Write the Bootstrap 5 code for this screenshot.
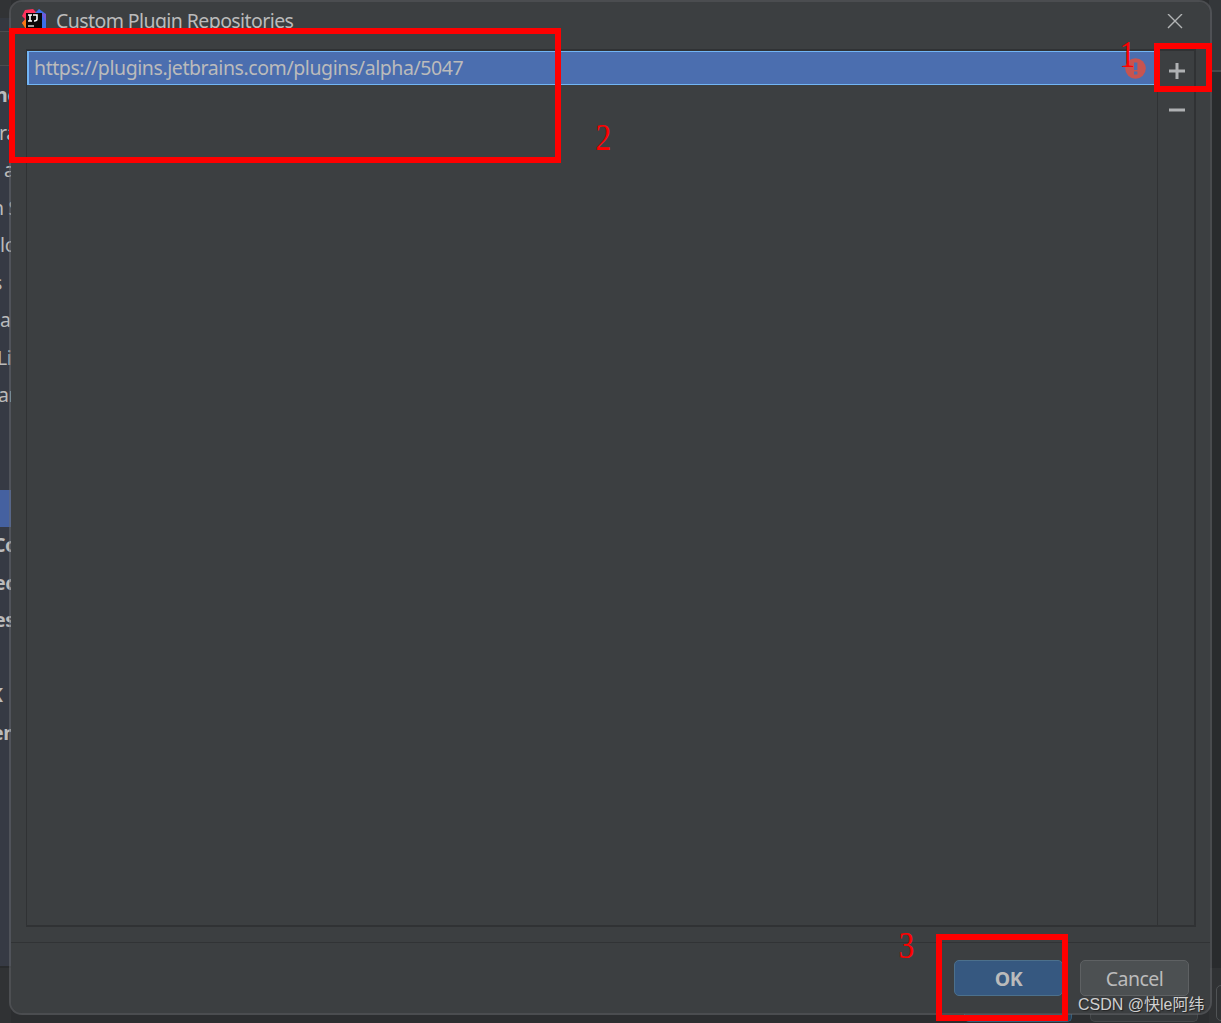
<!DOCTYPE html>
<html lang="en">
<head>
  <meta charset="UTF-8">
  <meta name="viewport" content="width=device-width, initial-scale=1.0">
  <title>Custom Plugin Repositories</title>
  <link rel="stylesheet" href="https://cdn.jsdelivr.net/npm/bootstrap@5.3.0/dist/css/bootstrap.min.css">
  <style>
    body {
      width: 1221px;
      height: 1023px;
      background: #2c2e30;
      color: #bbbbbb;
      font-family: "Noto Sans", "Noto Sans CJK SC", sans-serif;
      font-size: 19.5px;
      line-height: 1;
    }

    /* Settings window behind the dialog */
    .behind-left { width: 11px; }
    .behind-title { height: 31px; background: linear-gradient(#313335 18px, #343840 18px); }
    .behind-search { height: 35px; background: #3a3d3e; border-top: 1px solid #4b4d4f; border-bottom: 1px solid #4b4d4f; }
    .behind-tree { height: 902px; padding-top: 11px; background: #363a44; border-bottom: 2px solid #292b2d; }
    .tree-row { height: 37.5px; line-height: 36px; white-space: nowrap; letter-spacing: -.4px; }
    .tree-row.selected { background: #4561a0; }
    .behind-foot { background: #303234; }
    .behind-right { width: 12px; background: #292b2d; }
    .behind-right-top { height: 72px; background: #34373a; border-bottom: 2px solid #47494b; }
    .behind-right-foot { height: 55px; background: #303234; padding: 17px 0 0 7px; }
    .behind-edge { width: 30px; height: 36px; border: 1px solid #505355; border-radius: 5px; }
    .behind-buttons { height: 8px; left: 964px; top: 1014px; gap: 18px; }
    .behind-buttons div { width: 108px; border: 1px solid #45484a; border-top: 0; border-radius: 0 0 5px 5px; background: #35383a; }
    .behind-buttons div:first-child { border-color: #355e7c; background: #2b4258; }

    /* Dialog */
    .repo-dialog {
      left: 9px;
      top: 0;
      width: 1203px;
      height: 1015px;
      background: #3c3f41;
      background-clip: padding-box;
      border: 2px solid rgba(105, 108, 111, .5);
      border-radius: 13px;
    }
    .title-row { height: 47px; padding: 0 27px 8px 11px; }
    .title-text { margin: 0 0 1px 9px; letter-spacing: -.58px; }
    .url-text { letter-spacing: -.42px; }
    .repo-panel { height: 878px; margin: 0 14px 0 15px; border: 1px solid #303234; border-top-width: 2px; border-right-width: 2px; border-bottom-width: 2px; }
    .repo-entry { height: 34px; padding: 0 8px 0 5px; background: #4b6eaf; border: 1px solid #72b5f5; border-left-width: 2px; border-right: 0; margin-right: 3px; }
    .tool-strip { width: 37px; border-left: 1px solid #303234; padding: 12px 0 0 1px; gap: 22px; }
    .button-row { height: 71px; margin-top: 15px; padding: 17px 21px 0; border-top: 1px solid #313335; gap: 17px; }
    .btn-ide { width: 109px; height: 36px; padding: 0; color: #bbb; border: 1px solid #5e6163; border-radius: 5px; background: #4c5052; font-size: 19.5px; letter-spacing: -.5px; line-height: 35px; }
    .btn-ide.main { border-color: #4c708c; background: #365880; font-weight: 700; }

    /* Red annotations */
    .mark-box { border: 6px solid #f00; }
    .box-add { left: 1154px; top: 43px; width: 58px; height: 49px; }
    .box-list { left: 9px; top: 28px; width: 552px; height: 135px; }
    .box-ok { left: 936px; top: 934px; width: 132px; height: 87px; }
    .mark-num { color: #f00; font-family: "Liberation Serif", serif; font-size: 37px; }
    .num-add { left: 1118px; top: 36px; }
    .num-list { left: 594px; top: 119px; }
    .num-ok { left: 897px; top: 927px; }
    .mark-num span { display: inline-block; transform: scaleX(.85); }
    .watermark {
      left: 1078px;
      top: 997px;
      color: #d0d0d0;
      font-family: "Liberation Sans", "Noto Sans CJK SC", sans-serif;
      font-size: 16px;
      white-space: nowrap;
      text-shadow: 1px 1px 1px #222;
    }
  </style>
</head>
<body class="position-relative overflow-hidden">
  <div class="d-flex justify-content-between h-100">
    <div class="behind-left d-flex flex-column overflow-hidden">
      <div class="behind-title"></div>
      <div class="behind-search"></div>
      <div class="behind-tree overflow-hidden" id="tree"></div>
      <div class="behind-foot flex-grow-1"></div>
    </div>
    <div class="behind-right d-flex flex-column justify-content-between overflow-hidden">
      <div class="behind-right-top"></div>
      <div class="behind-right-foot"><div class="behind-edge"></div></div>
    </div>
  </div>
  <div class="behind-buttons position-absolute d-flex"><div></div><div></div></div>

  <div class="repo-dialog position-absolute d-flex flex-column">
    <div class="title-row d-flex align-items-center flex-shrink-0">
      <svg width="25" height="25" viewBox="0 0 25 25">
        <path d="M3 1 11 0l6 6-5 10-9 1-3-3 3-4-3-3z" fill="#fe315d"/>
        <path d="M0 14l4-4 5 9-4 3z" fill="#f97a12"/>
        <path d="M13 4l4-4 7 5v16l-8 4-8-3z" fill="#3b6fe8"/>
        <path d="M19 4l5 1v8z" fill="#7359d6"/>
        <path d="M4 4h16v16H4z" fill="#080808"/>
        <path d="M6 6h4M8 6v6M6 12h4M11 6h4v4q0 2-3 2" fill="none" stroke="#fff" stroke-width="1.6"/>
        <path d="M6 17h6" stroke="#ddd" stroke-width="1.4"/>
      </svg>
      <span class="title-text">Custom Plugin Repositories</span>
      <svg class="ms-auto" width="16" height="16" viewBox="0 0 16 16">
        <path d="M1 0l14 14M15 0 1 14" stroke="#b2b4b5" stroke-width="1.4"/>
      </svg>
    </div>

    <div class="repo-panel d-flex flex-shrink-0">
      <div class="flex-grow-1">
        <div class="repo-entry d-flex align-items-center justify-content-between">
          <span class="url-text">https://plugins.jetbrains.com/plugins/alpha/5047</span>
          <svg width="21" height="21" viewBox="0 0 21 21">
            <circle cx="10.5" cy="10.5" r="10.3" fill="#c75450"/>
            <path d="M9 4.5h3.4v7.5H9zM9 13.5h3.4v3H9z" fill="#4b6eaf"/>
          </svg>
        </div>
      </div>
      <div class="tool-strip d-flex flex-column align-items-center">
        <svg width="16" height="16" viewBox="0 0 16 16"><path d="M8 0v16M0 8h16" stroke="#afb1b3" stroke-width="3"/></svg>
        <svg width="16" height="16" viewBox="0 0 16 16"><path d="M0 9h16" stroke="#afb1b3" stroke-width="3"/></svg>
      </div>
    </div>

    <div class="button-row d-flex justify-content-end">
      <button class="btn btn-ide main">OK</button>
      <button class="btn btn-ide">Cancel</button>
    </div>
  </div>

  <div class="mark-box box-add position-absolute"></div>
  <div class="mark-box box-list position-absolute"></div>
  <div class="mark-box box-ok position-absolute"></div>
  <div class="mark-num num-add position-absolute"><span>1</span></div>
  <div class="mark-num num-list position-absolute"><span>2</span></div>
  <div class="mark-num num-ok position-absolute"><span>3</span></div>
  <div class="watermark position-absolute">CSDN @快le阿纬</div>

  <script src="https://cdn.jsdelivr.net/npm/bootstrap@5.3.0/dist/js/bootstrap.bundle.min.js"></script>
  <script>
    // Visible slice of each tree label: text, horizontal shift, extra classes
    const rows = [
      ["nc", -5, "fw-bold"], ["ra", -1, ""], ["a", 4, ""], ["n S", -8, ""],
      ["lo", 0, ""], ["s", -7, ""], ["ar", 0, ""], ["Li", -3, ""], ["ar", -2, ""],
      ["", 0, ""], ["", 0, ""], ["", 0, "selected"],
      ["Co", -7, "fw-bold"], ["ec", -6, "fw-bold"], ["es", -6, "fw-bold"],
      ["", 0, ""], ["K", -10, "fw-bold"], ["en", -8, "fw-bold"]
    ];
    document.getElementById("tree").innerHTML = rows.map(([text, x, cls]) =>
      `<div class="tree-row ${cls}" style="text-indent:${x}px">${text}</div>`).join("");
  </script>
</body>
</html>
